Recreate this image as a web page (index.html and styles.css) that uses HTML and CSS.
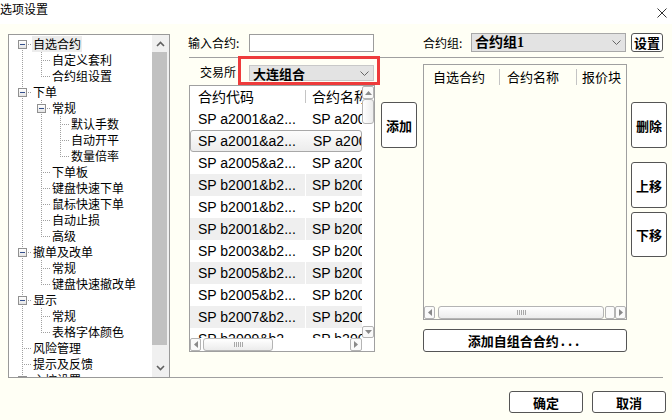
FILE: index.html
```html
<!DOCTYPE html>
<html lang="zh-CN">
<head>
    <meta charset="UTF-8">
    <title>选项设置</title>
    <link rel="stylesheet" href="styles.css">
</head>
<body>
<div class="dialog">
    <div class="titlebar">
        <span class="title">选项设置</span>
        <svg class="close" width="10" height="10" viewBox="0 0 10 10"><path d="M0.5 0.5 L9.5 9.5 M9.5 0.5 L0.5 9.5" stroke="#333" stroke-width="1"/></svg>
    </div>

    <div class="main">
        <!-- left tree -->
        <div class="tree">
            <ul class="tree-list">
                <li class="node"><span class="g x first"><i></i></span><span class="label sel">自选合约</span></li>
                <li class="node"><span class="g v"></span><span class="g t"></span><span class="label">自定义套利</span></li>
                <li class="node"><span class="g v"></span><span class="g l"></span><span class="label">合约组设置</span></li>
                <li class="node"><span class="g x"><i></i></span><span class="label">下单</span></li>
                <li class="node"><span class="g v"></span><span class="g x"><i></i></span><span class="label">常规</span></li>
                <li class="node"><span class="g v"></span><span class="g v"></span><span class="g t"></span><span class="label">默认手数</span></li>
                <li class="node"><span class="g v"></span><span class="g v"></span><span class="g t"></span><span class="label">自动开平</span></li>
                <li class="node"><span class="g v"></span><span class="g v"></span><span class="g l"></span><span class="label">数量倍率</span></li>
                <li class="node"><span class="g v"></span><span class="g t"></span><span class="label">下单板</span></li>
                <li class="node"><span class="g v"></span><span class="g t"></span><span class="label">键盘快速下单</span></li>
                <li class="node"><span class="g v"></span><span class="g t"></span><span class="label">鼠标快速下单</span></li>
                <li class="node"><span class="g v"></span><span class="g t"></span><span class="label">自动止损</span></li>
                <li class="node"><span class="g v"></span><span class="g l"></span><span class="label">高级</span></li>
                <li class="node"><span class="g x"><i></i></span><span class="label">撤单及改单</span></li>
                <li class="node"><span class="g v"></span><span class="g t"></span><span class="label">常规</span></li>
                <li class="node"><span class="g v"></span><span class="g l"></span><span class="label">键盘快速撤改单</span></li>
                <li class="node"><span class="g x"><i></i></span><span class="label">显示</span></li>
                <li class="node"><span class="g v"></span><span class="g t"></span><span class="label">常规</span></li>
                <li class="node"><span class="g v"></span><span class="g l"></span><span class="label">表格字体颜色</span></li>
                <li class="node"><span class="g t"></span><span class="label">风险管理</span></li>
                <li class="node"><span class="g t"></span><span class="label">提示及反馈</span></li>
                <li class="node"><span class="g x"><i></i></span><span class="label">主控设置</span></li>
            </ul>
            <div class="tree-scroll">
                <div class="ts-up"><svg width="9" height="6" viewBox="0 0 9 6"><polyline points="1,5 4.5,1.5 8,5" fill="none" stroke="#606060" stroke-width="1.6"/></svg></div>
                <div class="ts-thumb"></div>
                <div class="ts-rest"><svg width="9" height="6" viewBox="0 0 9 6"><polyline points="1,1 4.5,4.5 8,1" fill="none" stroke="#606060" stroke-width="1.6"/></svg></div>
            </div>
        </div>

        <!-- right side -->
        <div class="right">
            <div class="toprow">
                <span class="field-label lbl-code">输入合约:</span>
                <input class="input" type="text">
                <span class="field-label lbl-group">合约组:</span>
                <div class="select select-group">
                    <span class="select-text serif">合约组1</span>
                    <svg width="9" height="5" viewBox="0 0 9 5"><polyline points="0.5,0.5 4.5,4.5 8.5,0.5" fill="none" stroke="#666" stroke-width="1"/></svg>
                </div>
                <button class="btn btn-small">设置</button>
            </div>
            <div class="rule"></div>

            <div class="content">
                <div class="col-a">
                    <div class="exch">
                        <span class="field-label exch-label">交易所</span>
                        <div class="mark">
                            <div class="select select-exch">
                                <span class="select-text">大连组合</span>
                                <svg width="9" height="5" viewBox="0 0 9 5"><polyline points="0.5,0.5 4.5,4.5 8.5,0.5" fill="none" stroke="#666" stroke-width="1"/></svg>
                            </div>
                        </div>
                    </div>

                    <div class="table">
                        <div class="rows">
                            <div class="row head"><span>合约代码</span><span>合约名称</span></div>
                            <div class="row"><span>SP a2001&amp;a2...</span><span>SP a2001&amp;a2...</span></div>
                            <div class="row sel"><span>SP a2001&amp;a2...</span><span>SP a2001&amp;a2...</span></div>
                            <div class="row"><span>SP a2005&amp;a2...</span><span>SP a2005&amp;a2...</span></div>
                            <div class="row alt"><span>SP b2001&amp;b2...</span><span>SP b2001&amp;b2...</span></div>
                            <div class="row"><span>SP b2001&amp;b2...</span><span>SP b2001&amp;b2...</span></div>
                            <div class="row alt"><span>SP b2001&amp;b2...</span><span>SP b2001&amp;b2...</span></div>
                            <div class="row"><span>SP b2003&amp;b2...</span><span>SP b2003&amp;b2...</span></div>
                            <div class="row alt"><span>SP b2005&amp;b2...</span><span>SP b2005&amp;b2...</span></div>
                            <div class="row"><span>SP b2005&amp;b2...</span><span>SP b2005&amp;b2...</span></div>
                            <div class="row alt"><span>SP b2007&amp;b2...</span><span>SP b2007&amp;b2...</span></div>
                            <div class="row"><span>SP b2009&amp;b2...</span><span>SP b2009&amp;b2...</span></div>
                        </div>
                        <div class="vs">
                            <div class="arr arr-v"><svg width="7" height="4" viewBox="0 0 7 4"><polygon points="0,4 3.5,0 7,4" fill="#8a8a8a"/></svg></div>
                            <div class="thumb-v"></div>
                            <div class="fill"></div>
                            <div class="arr arr-v arr-down"><svg width="7" height="4" viewBox="0 0 7 4"><polygon points="0,0 3.5,4 7,0" fill="#8a8a8a"/></svg></div>
                        </div>
                        <div class="hs">
                            <div class="arr arr-h"><svg width="4" height="7" viewBox="0 0 4 7"><polygon points="4,0 0,3.5 4,7" fill="#8a8a8a"/></svg></div>
                            <div class="thumb-h thumb-short"><span class="grip"></span></div>
                            <div class="fill"></div>
                            <div class="arr arr-h arr-right"><svg width="4" height="7" viewBox="0 0 4 7"><polygon points="0,0 4,3.5 0,7" fill="#8a8a8a"/></svg></div>
                        </div>
                        <div class="corner"></div>
                    </div>
                </div>

                <div class="col-add">
                    <button class="btn btn-tall">添加</button>
                </div>

                <div class="col-list">
                    <div class="list">
                        <div class="list-head">
                            <span class="lh lh1">自选合约</span>
                            <span class="lh lh2">合约名称</span>
                            <span class="lh lh3">报价块</span>
                        </div>
                        <div class="list-body"></div>
                        <div class="hs hs-list">
                            <div class="arr arr-h"><svg width="4" height="7" viewBox="0 0 4 7"><polygon points="4,0 0,3.5 4,7" fill="#8a8a8a"/></svg></div>
                            <div class="thumb-h thumb-long"><span class="grip"></span></div>
                            <div class="arr arr-h arr-gap"></div>
                            <div class="arr arr-h"><svg width="4" height="7" viewBox="0 0 4 7"><polygon points="0,0 4,3.5 0,7" fill="#8a8a8a"/></svg></div>
                        </div>
                    </div>
                    <button class="btn btn-wide">添加自组合合约<span class="dots">...</span></button>
                </div>

                <div class="col-btns">
                    <button class="btn btn-tall">删除</button>
                    <button class="btn btn-tall btn-up">上移</button>
                    <button class="btn btn-tall btn-down">下移</button>
                </div>
            </div>

            <div class="foot-rule"></div>
            <div class="foot">
                <button class="btn btn-foot">确定</button>
                <button class="btn btn-foot">取消</button>
            </div>
        </div>
    </div>
</div>
</body>
</html>
```

FILE: styles.css
```css
* {
    box-sizing: border-box;
}
body {
    margin: 0;
    font-family: "Noto Sans CJK SC", "Liberation Sans", sans-serif;
    font-size: 13px;
    color: #000;
    background: #fffff5;
}
.dialog {
    width: 672px;
    height: 420px;
    overflow: hidden;
}
.titlebar {
    height: 24px;
    background: #fff;
    display: flex;
    justify-content: space-between;
    align-items: flex-start;
}
.title {
    font-size: 12px;
    line-height: 18px;
}
.close {
    margin: 8px 5px 0 0;
}
.main {
    display: flex;
    padding: 10px 0 0 8px;
}

/* tree */
.tree {
    --dv: repeating-linear-gradient(to bottom, #a0a0a0 0 1px, transparent 1px 2px);
    --dh: repeating-linear-gradient(to right, #a0a0a0 0 1px, transparent 1px 2px);
    width: 162px;
    height: 344px;
    border: 1px solid #999;
    background: #fff;
    display: flex;
    flex: none;
}
.tree-list {
    flex: 1;
    list-style: none;
    margin: 0;
    padding: 1px 0 0 4px;
    overflow: hidden;
}
.node {
    display: flex;
    height: 16px;
}
.g {
    width: 19px;
    height: 16px;
    flex: none;
}
.g.v {
    background: var(--dv) 9px 0 / 1px 100% no-repeat;
}
.g.t {
    background: var(--dv) 9px 0 / 1px 100% no-repeat, var(--dh) 11px 8px / 8px 1px no-repeat;
}
.g.l {
    background: var(--dv) 9px 0 / 1px 9px no-repeat, var(--dh) 11px 8px / 8px 1px no-repeat;
}
.g.x {
    background: var(--dv) 9px 0 / 1px 100% no-repeat, var(--dh) 15px 8px / 4px 1px no-repeat;
}
.g.x.first {
    background: var(--dv) 9px 8px / 1px 8px no-repeat, var(--dh) 15px 8px / 4px 1px no-repeat;
}
.g.x i {
    display: block;
    width: 9px;
    height: 9px;
    margin: 4px 0 0 5px;
    border: 1px solid #909090;
    background: linear-gradient(#34508c, #34508c) center / 5px 1px no-repeat, linear-gradient(#fff, #e4e4e4);
}
.label {
    font-size: 12px;
    line-height: 16px;
    padding: 0 1px;
    white-space: nowrap;
}
.label.sel {
    background: #ececec;
}
.tree-scroll {
    width: 17px;
    flex: none;
    background: #f0f0f0;
    display: flex;
    flex-direction: column;
}
.ts-up {
    height: 17px;
    display: flex;
    align-items: center;
    justify-content: center;
}
.ts-thumb {
    height: 293px;
    width: 15px;
    background: #c1c1c1;
}
.ts-rest {
    flex: 1;
    display: flex;
    align-items: flex-end;
    justify-content: center;
    padding-bottom: 6px;
}

/* right side */
.right {
    margin-left: 18px;
    margin-top: -1px;
    width: 480px;
    display: flex;
    flex-direction: column;
}
.toprow {
    display: flex;
    align-items: center;
    height: 19px;
}
.field-label {
    font-size: 12px;
    line-height: 19px;
    white-space: nowrap;
}
.lbl-code {
    width: 61px;
}
.input {
    width: 125px;
    height: 18px;
    margin: 1px 0 0;
    padding: 0;
    border: 1px solid #9c9c9c;
    background: #fff;
}
.lbl-group {
    margin-left: 49px;
    width: 48px;
}
.select {
    display: flex;
    align-items: center;
    justify-content: space-between;
    background: #e3e3e3;
    border: 1px solid #a8a8a8;
    padding: 0 4px 0 3px;
    font-size: 13px;
    font-weight: bold;
}
.select-text {
    line-height: 15px;
}
.serif {
    font-family: "Liberation Serif", "Noto Sans CJK SC", serif;
    font-size: 14px;
}
.select-group {
    width: 155px;
    height: 19px;
}
.btn {
    display: flex;
    align-items: center;
    justify-content: center;
    padding: 0;
    background: #fff;
    border: 1px solid #555;
    border-radius: 3px;
    font-family: "Noto Sans CJK SC", sans-serif;
    font-size: 13px;
    font-weight: bold;
    color: #000;
    flex: none;
}
.btn-small {
    width: 32px;
    height: 19px;
    margin-left: 5px;
}
.rule {
    height: 0;
    width: 475px;
    margin: 5px 0 0 1px;
    border-top: 1px solid #a0a0a0;
}
.content {
    display: flex;
    align-items: flex-start;
}
.col-a {
    width: 192px;
    flex: none;
}
.exch {
    display: flex;
    margin-top: -2px;
}
.exch-label {
    width: 50px;
    padding: 8px 0 0 12px;
    line-height: 16px;
}
.mark {
    width: 142px;
    height: 29px;
    border: 3px solid #ee3b3b;
    padding: 6px 0 0 8px;
}
.select-exch {
    width: 125px;
    height: 16px;
    border-color: #c8c8c8;
}

/* contract table */
.table {
    width: 186px;
    height: 267px;
    margin-left: 1px;
    border: 1px solid #a0a0a0;
    background: #fff;
    display: grid;
    grid-template-columns: 172px 12px;
    grid-template-rows: 252px 13px;
    font-family: "Liberation Sans", "Noto Sans CJK SC", sans-serif;
    font-size: 14px;
}
.rows {
    overflow: hidden;
}
.row {
    display: grid;
    grid-template-columns: 115px 1fr;
    column-gap: 1px;
    height: 22px;
    line-height: 22px;
}
.row span {
    white-space: nowrap;
    overflow: hidden;
    padding-left: 8px;
}
.row span + span {
    padding-left: 6px;
}
.row.alt span {
    background: #efefef;
}
.row.head {
    background: linear-gradient(#c4c4c4, #c4c4c4) 115px 4px / 1px 13px no-repeat;
}
.row.sel {
    border: 1px solid #a8a8a8;
    border-radius: 3px;
    line-height: 20px;
    background: linear-gradient(#fcfcfc, #ececec);
}
.row.sel span {
    padding-left: 7px;
}
.row.sel span + span {
    padding-left: 6px;
}
.vs {
    display: flex;
    flex-direction: column;
}
.hs {
    display: flex;
    height: 13px;
}
.arr {
    display: flex;
    align-items: center;
    justify-content: center;
    border: 1px solid #b4b4b4;
    border-radius: 2px;
    background: #fafafa;
    flex: none;
}
.arr-v {
    height: 13px;
}
.arr-down {
    height: 12px;
}
.arr-h {
    width: 11px;
}
.arr-right {
    width: 12px;
}
.thumb-v {
    height: 25px;
    border: 1px solid #b4b4b4;
    border-radius: 3px;
    background: linear-gradient(to right, #fff, #ececec);
}
.thumb-h {
    margin-left: 2px;
    border: 1px solid #b4b4b4;
    border-radius: 3px;
    background: linear-gradient(#fff, #ececec);
    display: flex;
    align-items: center;
    justify-content: center;
    flex: none;
}
.thumb-short {
    width: 70px;
}
.grip {
    width: 9px;
    height: 5px;
    background: repeating-linear-gradient(to right, #a8a8a8 0 1px, transparent 1px 2px);
}
.fill {
    flex: 1;
}

.col-add {
    margin: 44px 0 0 1px;
}
.btn-tall {
    width: 36px;
    height: 46px;
}

/* selected contracts list */
.col-list {
    width: 204px;
    margin: 6px 0 0 6px;
    flex: none;
}
.list {
    height: 256px;
    border: 1px solid #a0a0a0;
    display: flex;
    flex-direction: column;
}
.list-head {
    height: 24px;
    display: flex;
    align-items: center;
    font-size: 13px;
    line-height: 16px;
}
.lh {
    white-space: nowrap;
}
.lh1 {
    width: 75px;
    padding-left: 9px;
}
.lh2,
.lh3 {
    border-left: 1px solid #c4c4c4;
}
.lh2 {
    width: 77px;
    padding-left: 7px;
}
.lh3 {
    padding-left: 5px;
}
.list-body {
    flex: 1;
}
.hs-list {
    width: 202px;
}
.thumb-long {
    width: 166px;
    margin-left: 3px;
}
.arr-gap {
    width: 10px;
    margin-left: 1px;
}
.btn-wide {
    width: 204px;
    height: 23px;
    margin-top: 9px;
}
.dots {
    letter-spacing: 3px;
    margin-left: 2px;
}
.col-btns {
    margin: 44px 0 0 4px;
    display: flex;
    flex-direction: column;
}
.btn-up {
    margin-top: 14px;
}
.btn-down {
    margin-top: 4px;
    height: 45px;
}

/* footer */
.foot-rule {
    height: 0;
    width: 493px;
    margin: 25px 0 0 -18px;
    border-top: 1px solid #a0a0a0;
}
.foot {
    display: flex;
    justify-content: flex-end;
    gap: 9px;
    width: 478px;
    margin-top: 13px;
}
.btn-foot {
    width: 74px;
    height: 22px;
}
```
